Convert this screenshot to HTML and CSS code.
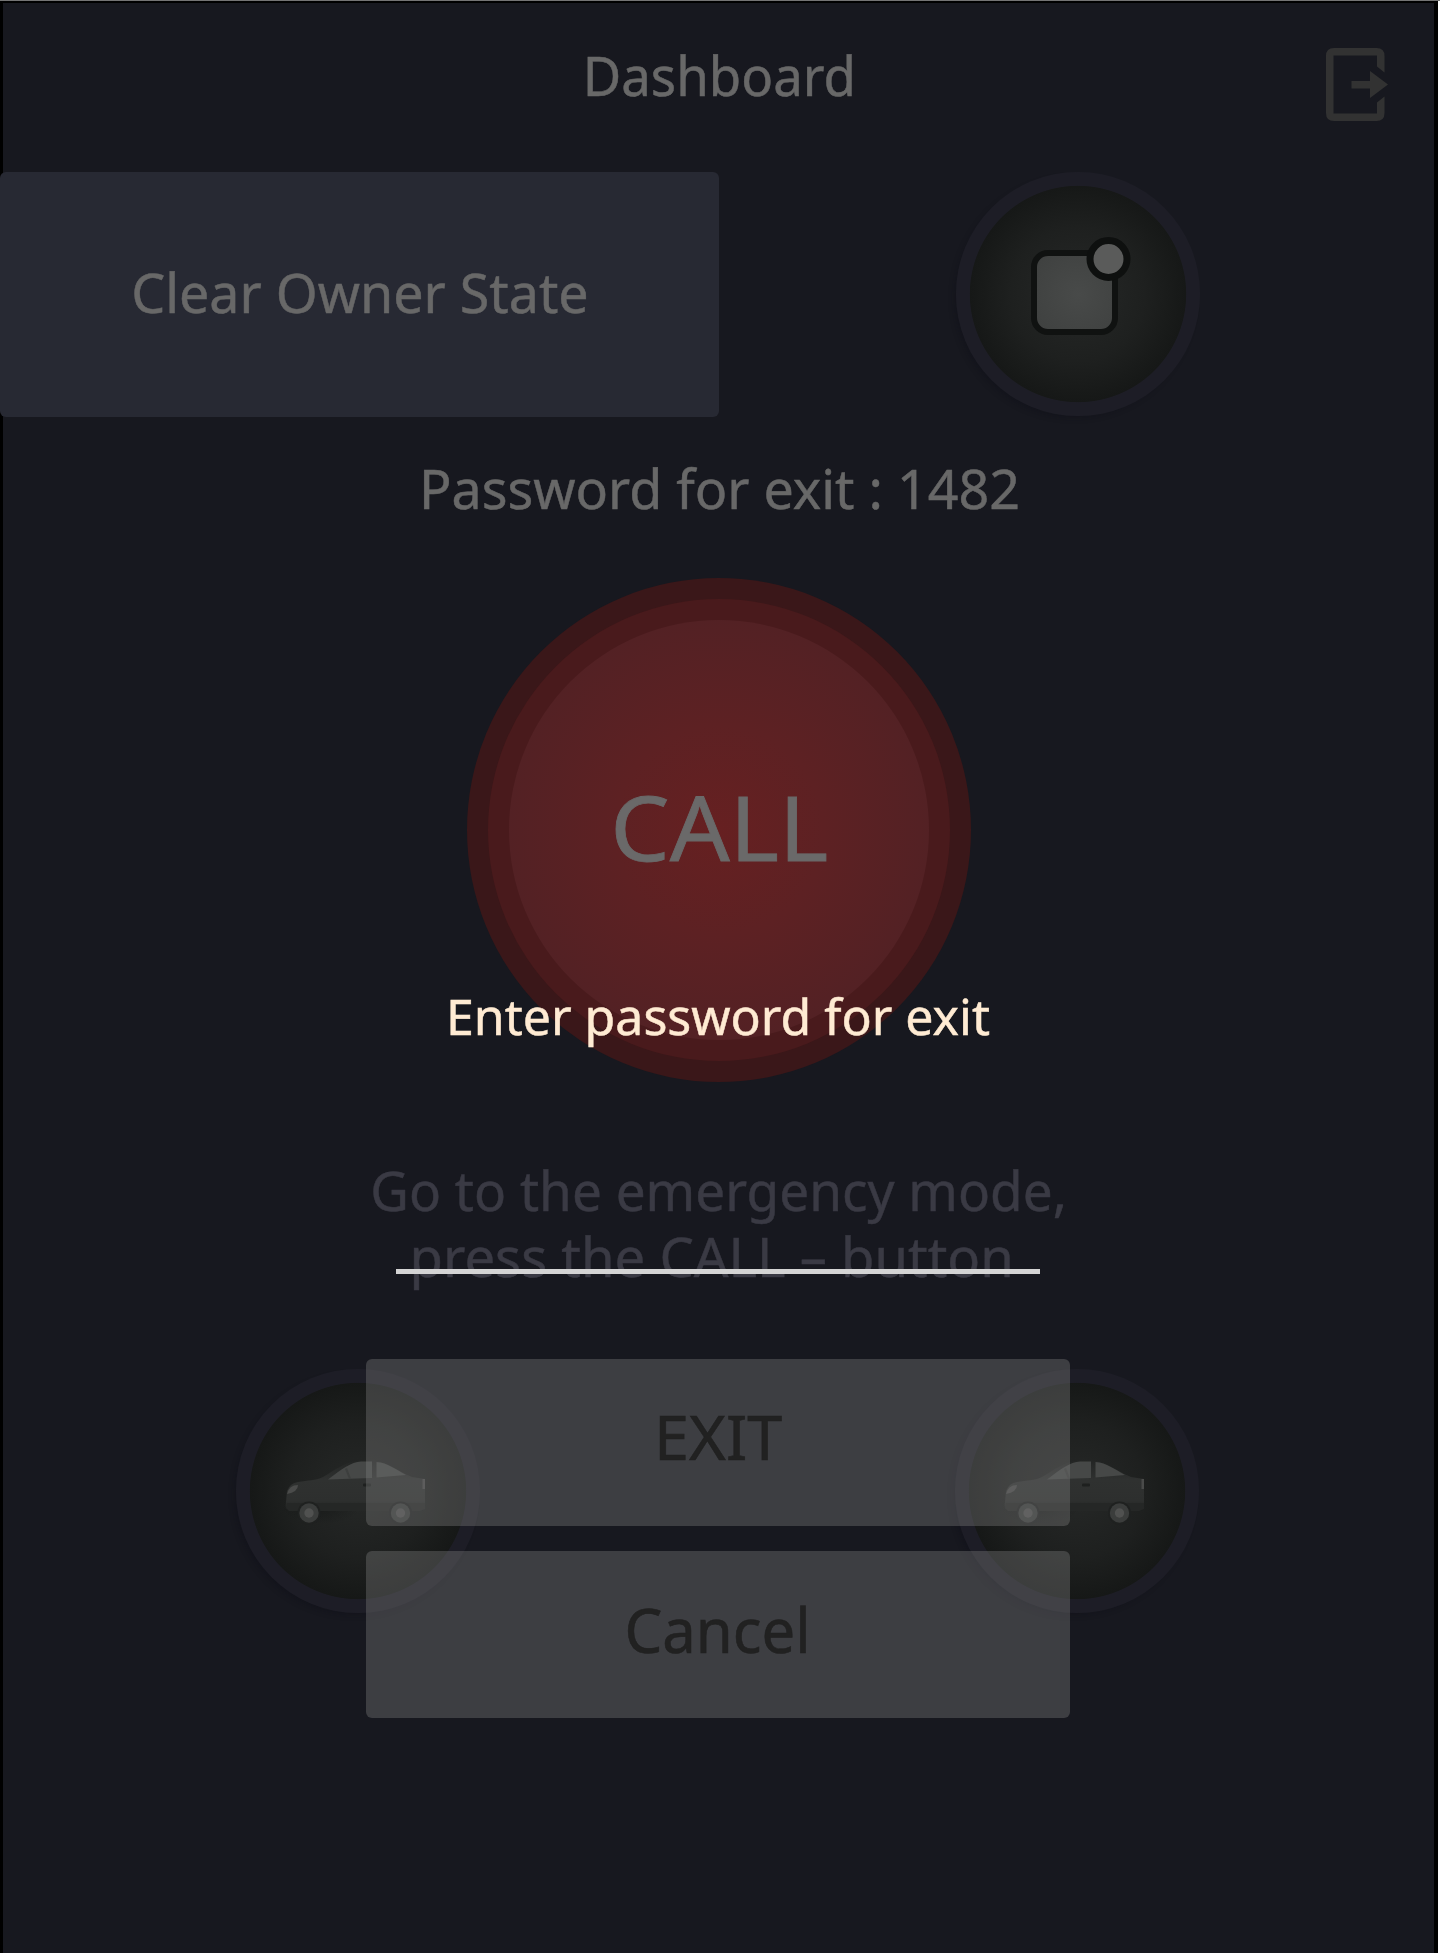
FILE: index.html
```html
<!DOCTYPE html>
<html lang="en">
<head>
<meta charset="utf-8">
<title>Dashboard</title>
<link rel="stylesheet" href="styles.css">
</head>
<body>
<div class="screen">
  <main class="dashboard">
    <header class="header">
      <span></span>
      <h1 class="title"><span>Dashboard</span></h1>
      <svg class="exit-icon" viewBox="0 0 64 76">
        <path fill-rule="evenodd" d="M8 0 H50.500 Q58.500 0 58.500 8 V24.500 L51 18.500 V7.500 H7.500 V65.500 H51 V54.500 L58.500 48.500 V65 Q58.500 73 50.500 73 H8 Q0 73 0 65 V8 Q0 0 8 0Z"/>
        <path d="M25.500 33 H44 V23 L62 36.500 L44 50 V40.500 H25.500Z"/>
      </svg>
    </header>
    <div class="row">
      <button class="owner"><span>Clear Owner State</span></button>
      <div class="cell"><div class="round">
        <svg viewBox="0 0 244 244" width="244" height="244">
          <defs>
            <radialGradient id="tile" gradientUnits="userSpaceOnUse" cx="122" cy="122" r="60"><stop offset="0" stop-color="#484a49"/><stop offset="1" stop-color="#3e403f"/></radialGradient>
          </defs>
          <rect x="78" y="81" width="81" height="79" rx="14" fill="url(#tile)" stroke="#101211" stroke-width="6"/>
          <circle cx="152.500" cy="87" r="18.500" fill="#5a5b5a" stroke="#0e100f" stroke-width="7"/>
        </svg>
      </div></div>
    </div>
    <p class="password"><span>Password for exit : 1482</span></p>
    <button class="call"><span class="call-mid"><span class="call-inner"><span class="call-text">CALL</span></span></span></button>
    <p class="hint"><span>Go to the emergency mode,</span><span class="line2">press the CALL – button</span></p>
    <div class="row cars">
      <div class="cell"><div class="round"><svg class="car"><use href="#car"/></svg></div></div>
      <div class="cell"><div class="round"><svg class="car"><use href="#car"/></svg></div></div>
    </div>
  </main>
  <section class="dialog">
    <p class="prompt"><span>Enter password for exit</span></p>
    <div class="field"></div>
    <button class="action"><span class="exit-label">EXIT</span></button>
    <button class="action"><span class="cancel-label">Cancel</span></button>
  </section>
  <svg width="0" height="0" class="defs" aria-hidden="true">
    <defs>
      <linearGradient id="body" x1="0" y1="0" x2="0" y2="1">
        <stop offset="0" stop-color="#232524"/><stop offset=".4" stop-color="#2f3130"/><stop offset=".8" stop-color="#2d2f2e"/><stop offset="1" stop-color="#212322"/>
      </linearGradient>
      <radialGradient id="shade"><stop offset="0" stop-color="#0e100f" stop-opacity=".8"/><stop offset="1" stop-color="#0e100f" stop-opacity="0"/></radialGradient>
      <symbol id="car" viewBox="0 0 150 80">
        <ellipse cx="40" cy="60" rx="40" ry="17" fill="url(#shade)" opacity=".5"/>
        <path d="M6 62 Q4 61 5 55 L6 44 Q9 36 17 35 C27 33 34 34 42 30 C56 22 65 14 80 13 C100 10 114 23 131 30 L144 32 L144 61 L139 64 Z" fill="url(#body)"/>
        <path d="M6 56 H144 V62 L139 64 H8 L5 61Z" fill="#252726"/>
        <path d="M47 32.500 C61 22 70 15 80 14.500 H91 V31Z" fill="#464847"/>
        <path d="M95.500 15 C107 16 114 22 125 28 L95.500 30.500Z" fill="#464847"/>
        <path d="M64 22 L68 31.800 L70 31.800 L66 21Z" fill="#3d3f3e"/>
        <path d="M6 47 Q8 38 17 38 Q17 45 6 47Z" fill="#4a4b4a"/>
        <rect x="141.500" y="32" width="2.500" height="10" fill="#4a4b4a"/>
        <rect x="82" y="36.500" width="8" height="3" rx="1" fill="#1e201f"/>
        <circle cx="28" cy="66" r="11.500" fill="#1f2120"/><circle cx="28" cy="66" r="9.700" fill="#3b3d3c"/><circle cx="28" cy="66" r="4.700" fill="#505150"/>
        <circle cx="119.500" cy="66" r="11.500" fill="#1f2120"/><circle cx="119.500" cy="66" r="9.700" fill="#3b3d3c"/><circle cx="119.500" cy="66" r="4.700" fill="#505150"/>
      </symbol>
    </defs>
  </svg>
</div>
</body>
</html>
```
FILE: styles.css
```css
* { box-sizing: border-box; }
body { margin: 0; padding-top: 1px; background: linear-gradient(#747474 1px, #fff 1px); font-family: "Noto Sans", sans-serif; }
.defs { position: absolute; }
.screen {
  position: relative;
  width: 1438px;
  height: 1952px;
  overflow: hidden;
  background: #17181f;
  border-top: 2px solid #000;
  border-right: 4px solid #000;
  box-shadow: inset 3px 0 #000;
}
p, h1 { margin: 0; font-weight: 400; text-align: center; white-space: nowrap; }
span { display: inline-block; }
button { border: 0; padding: 0; font: inherit; }
.dashboard { width: 1438px; display: flex; flex-direction: column; align-items: center; color: #686868; -webkit-text-stroke: .5px; }
.header {
  width: 100%;
  height: 169px;
  display: grid;
  grid-template-columns: 140px 1fr 140px;
  padding: 32px 0 0;
}
.title { font-size: 55px; line-height: 80px; }
.title span { transform: scaleX(.96); }
.exit-icon { width: 64px; height: 76px; margin: 13px 0 0 28px; fill: #323232; }
.row { width: 100%; display: grid; grid-template-columns: 719px 719px; }
.owner { height: 245px; border-radius: 6px; background: #272933; color: #686868; font-size: 55px; }
.owner span { transform: translateY(-3px) scaleX(.978); }
.cell { display: flex; justify-content: center; padding-right: 2px; }
.cars .cell { padding-right: 3px; }
.round {
  width: 244px;
  height: 244px;
  border-radius: 50%;
  display: flex;
  align-items: center;
  justify-content: center;
  background: radial-gradient(circle closest-side, #262827 0, #1e201f 55%, #161817 88.3%, #1d1d26 89%);
  box-shadow: -4px 4px 6px -3px rgba(12, 12, 22, .4);
}
.car { width: 150px; height: 80px; margin: 0 4px 9px 0; }
.password { margin-top: 31px; font-size: 54.500px; line-height: 80px; }
.password span { transform: scaleX(.987); }
.call { width: 504px; height: 504px; margin-top: 50px; padding: 21px; border-radius: 50%; background: #3a1719; color: #6a6969; }
.call-mid { display: block; width: 462px; height: 462px; padding: 21px; border-radius: 50%; background: #491a1c; }
.call-inner {
  display: flex;
  align-items: center;
  justify-content: center;
  width: 420px;
  height: 420px;
  border-radius: 50%;
  background: radial-gradient(circle closest-side, #662021 0, #5d2123 50%, #532124 100%);
}
.call-text { font-size: 90px; line-height: 120px; transform: translateY(-4px) scaleX(1.045); -webkit-text-stroke: .8px; }
.hint { margin: 75px 0 80px; display: flex; flex-direction: column; align-items: center; font-size: 54.500px; line-height: 66px; color: #3a3a44; }
.hint span { transform: scaleX(.974); }
.hint .line2 { margin-right: 14px; transform: scaleX(.998); }
.dialog {
  position: absolute;
  inset: 0;
  display: flex;
  flex-direction: column;
  align-items: center;
  padding: 973px 0 0 2px;
}
.prompt { font-size: 50px; line-height: 80px; color: #ffebd3; -webkit-text-stroke: .5px; }
.field { width: 644px; height: 218px; margin-bottom: 85px; border-bottom: 5px solid #d4d4d4; }
.action {
  width: 704px;
  height: 167px;
  margin-bottom: 25px;
  border-radius: 6px;
  background: rgba(124, 126, 126, .375);
  color: #212121;
  font-size: 62px;
  -webkit-text-stroke: .6px;
}
.exit-label { transform: translateY(-7px) scaleX(1.015); }
.cancel-label { transform: translateY(-6px) scaleX(.965); }
```
